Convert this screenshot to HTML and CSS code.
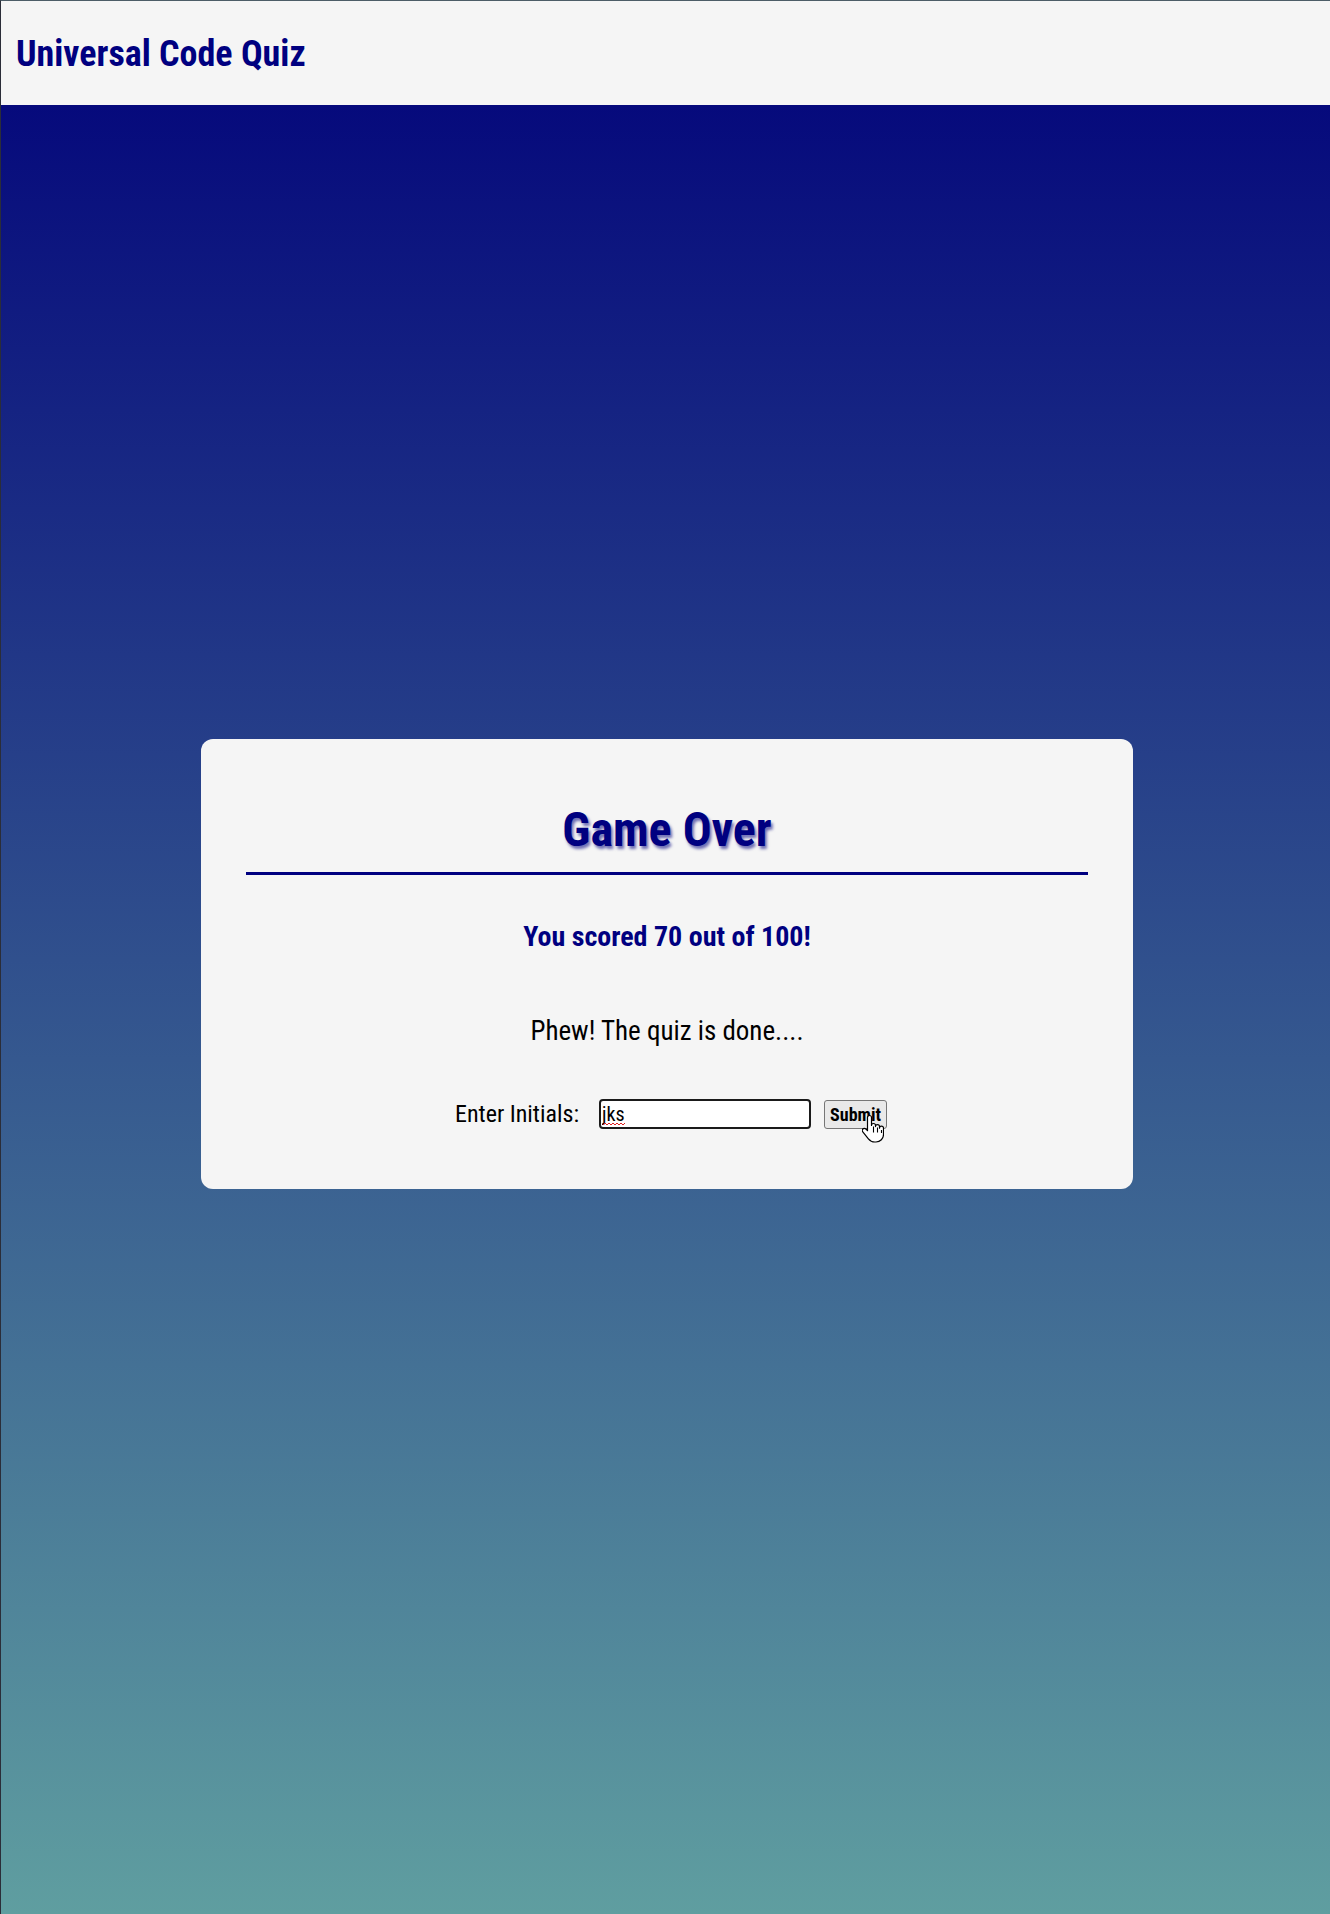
FILE: index.html
```html
<!DOCTYPE html>
<html lang="en">
<head>
<meta charset="utf-8">
<title>Universal Code Quiz</title>
<link rel="stylesheet" href="styles.css">
</head>
<body>
<div class="page">
  <header class="topbar">
    <h1 class="brand">Universal Code Quiz</h1>
  </header>
  <main class="stage">
    <section class="card">
      <h2 class="card-title">Game Over</h2>
      <p class="score">You scored 70 out of 100!</p>
      <p class="message">Phew! The quiz is done....</p>
      <form class="initials-row">
        <label class="initials-label" for="initials">Enter Initials:</label>
        <span class="input-wrap">
          <input class="initials-input" id="initials" type="text" value="jks" spellcheck="false">
          <svg class="squiggle" width="22" height="4" viewBox="0 0 22 4" aria-hidden="true">
            <path d="M0 3 L2 1 L4 3 L6 1 L8 3 L10 1 L12 3 L14 1 L16 3 L18 1 L20 3 L22 1" fill="none" stroke="#e02020" stroke-width="1"/>
          </svg>
        </span>
        <span class="submit-wrap">
          <button class="submit-btn" type="button">Submit</button>
          <svg class="cursor" width="22" height="34" viewBox="0 0 22 34" aria-hidden="true">
            <path d="M7.5 1.5c-1.1 0-2 .9-2 2v13.2l-1.6-1.7c-.9-.9-2.3-.9-3.1 0-.7.8-.7 2 0 2.8l5.6 7c1.6 2 3.8 3.2 6.4 3.2h1.2c4.3 0 7.5-3.4 7.5-7.6v-6.2c0-1.1-.9-2-2-2s-2 .9-2 2v-1.600c0-1.1-.9-2-2-2s-2 .9-2 2v-1.1c0-1.1-.9-2-2-2s-2 .9-2 2V3.5c0-1.1-.9-2-2-2z" fill="#fff" stroke="#000" stroke-width="1.2" stroke-linejoin="round"/>
            <path d="M11.5 12.5v6M15.5 13.6v5M19.5 16v3" stroke="#000" stroke-width="1.1" fill="none"/>
          </svg>
        </span>
      </form>
    </section>
  </main>
</div>
</body>
</html>
```

FILE: styles.css
```css
* {
  box-sizing: border-box;
}

html, body {
  margin: 0;
  padding: 0;
}

body {
  font-family: "Roboto Condensed", Roboto, "Liberation Sans", sans-serif;
  font-stretch: condensed;
  background: #5f9ea0;
}

.page {
  border-top: 1px solid #4d5d67;
  border-left: 1px solid #2b2d38;
  min-height: 100vh;
  display: flex;
  flex-direction: column;
}

.topbar {
  height: 104px;
  background: #f5f5f5;
  display: flex;
  align-items: center;
  padding: 1px 0 0 15px;
}

.brand {
  margin: 0;
  font-size: 36px;
  line-height: 1;
  font-weight: 700;
  color: #000080;
}

.stage {
  flex: 1;
  background: linear-gradient(to bottom, #060a7c 0%, #5f9ea0 100%);
  padding: 634px 0 0 3px;
}

.card {
  width: 932px;
  margin: 0 auto;
  background: #f5f5f5;
  border-radius: 12px;
  padding: 67px 45px 60px;
  text-align: center;
}

.card-title {
  margin: 0;
  font-size: 48px;
  line-height: 1;
  font-weight: 700;
  color: #000080;
  text-shadow: 2px 3px 3px rgba(0, 0, 128, 0.55);
  padding-bottom: 18px;
  border-bottom: 3px solid #000080;
}

.score {
  margin: 48px 0 0;
  font-size: 28px;
  line-height: 1;
  font-weight: 700;
  color: #000080;
}

.message {
  margin: 67px 0 0;
  font-size: 27px;
  line-height: 1;
  color: #000;
}

.initials-row {
  margin: 54px 0 0;
  display: flex;
  justify-content: center;
  align-items: center;
  padding-left: 8px;
}

.initials-label {
  font-size: 24px;
  color: #000;
  margin-right: 20px;
}

.input-wrap {
  position: relative;
  display: inline-flex;
}

.initials-input {
  width: 212px;
  height: 30px;
  border: 2px solid #1a1a1a;
  border-radius: 4px;
  background: #fff;
  font-family: inherit;
  font-size: 20px;
  padding: 0 1px;
  color: #000;
}

.squiggle {
  position: absolute;
  left: 4px;
  top: 23px;
}

.submit-wrap {
  position: relative;
  margin-left: 13px;
  display: inline-flex;
}

.submit-btn {
  width: 63px;
  height: 29px;
  padding: 0;
  font-family: inherit;
  font-size: 18px;
  font-weight: 700;
  color: #000;
  background: #e9e9e9;
  border: 1px solid #767676;
  border-radius: 3px;
}

.cursor {
  position: absolute;
  left: 38px;
  top: 14px;
}
```
